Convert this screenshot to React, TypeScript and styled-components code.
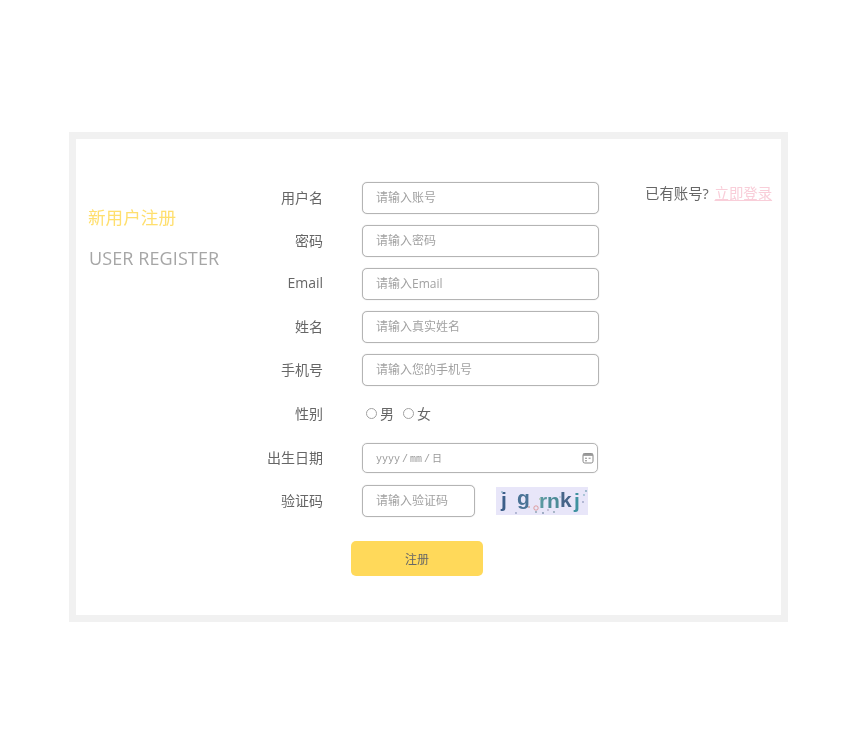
import React from "react";
import styled, { createGlobalStyle } from "styled-components";

const fontStack = `"Open Sans", "Noto Sans CJK SC", sans-serif`;

const GlobalStyle = createGlobalStyle`
  html, body {
    margin: 0;
    background: #fff;
    font-family: ${fontStack};
  }
`;

const fields = [
  { label: "用户名", placeholder: "请输入账号" },
  { label: "密码", placeholder: "请输入密码" },
  { label: "Email", placeholder: "请输入Email" },
  { label: "姓名", placeholder: "请输入真实姓名" },
  { label: "手机号", placeholder: "请输入您的手机号" },
];

const noise = [
  [6, 5, "#8fb7c9"], [20, 26, "#9aa3c4"], [33, 20, "#c79a9a"], [40, 25, "#8aa0b0"],
  [44, 12, "#a8c2a8"], [47, 26, "#7e93ad"], [52, 23, "#b7b0c9"], [58, 25, "#8aa0b0"],
  [64, 10, "#b7c6d9"], [88, 8, "#8fb7c9"], [90, 4, "#7da6b8"], [87, 15, "#9aa3c4"],
] as const;

const CalendarIcon = () => (
  <svg width="12" height="12" viewBox="0 0 12 12" fill="none">
    <rect x="1" y="1.5" width="10" height="9.5" rx="1.8" stroke="#888" strokeWidth="1" />
    <rect x="1" y="1.5" width="10" height="2.4" fill="#999" />
    <rect x="3" y="5.6" width="2" height="1.4" fill="#aaa" />
    <rect x="6.6" y="5.6" width="2" height="1.4" fill="#aaa" />
    <rect x="3" y="8" width="2" height="1.4" fill="#aaa" />
  </svg>
);

const Captcha = () => (
  <CaptchaBox viewBox="0 0 92 28" role="img" aria-label="captcha">
    <CaptchaChar x="5" y="20" fill="#3d5f8a">j</CaptchaChar>
    <CaptchaChar x="21" y="18" fill="#4a7396">g</CaptchaChar>
    <CaptchaChar x="43" y="21" fill="#5a98a0">r</CaptchaChar>
    <CaptchaChar x="51" y="21" fill="#4d8c98">n</CaptchaChar>
    <CaptchaChar x="64" y="20" fill="#466488">k</CaptchaChar>
    <CaptchaChar x="78" y="21" fill="#3f92a0">j</CaptchaChar>
    <circle cx="40" cy="21" r="2.2" fill="none" stroke="#d98a8a" strokeWidth="0.8" />
    {noise.map(([cx, cy, fill], i) => (
      <circle key={i} cx={cx} cy={cy} r="0.9" fill={fill} />
    ))}
  </CaptchaBox>
);

export default function App() {
  return (
    <Page>
      <GlobalStyle />
      <Card>
        <Intro>
          <IntroTitle>新用户注册</IntroTitle>
          <IntroSub>USER REGISTER</IntroSub>
        </Intro>

        <Form onSubmit={(e) => e.preventDefault()}>
          {fields.map((f) => (
            <Row key={f.label}>
              <Label>{f.label}</Label>
              <TextInput placeholder={f.placeholder} />
            </Row>
          ))}

          <GenderRow>
            <Label>性别</Label>
            <RadioGroup>
              <RadioOption>
                <Radio type="radio" name="sex" />男
              </RadioOption>
              <RadioOption>
                <Radio type="radio" name="sex" />女
              </RadioOption>
            </RadioGroup>
          </GenderRow>

          <Row>
            <Label>出生日期</Label>
            <DateField>
              <DateText>yyyy / mm / 日</DateText>
              <CalendarIcon />
            </DateField>
          </Row>

          <Row>
            <Label>验证码</Label>
            <CodeInput placeholder="请输入验证码" />
            <Captcha />
          </Row>

          <SubmitButton type="submit">注册</SubmitButton>
        </Form>

        <LoginHint>
          已有账号? <LoginLink href="#">立即登录</LoginLink>
        </LoginHint>
      </Card>
    </Page>
  );
}

const Page = styled.div`
  padding: 132px 0 0 69px;
  height: 622px;
  filter: blur(0.5px);
`;

const Card = styled.div`
  box-sizing: border-box;
  width: 719px;
  height: 490px;
  border: 7px solid #f1f1f1;
  display: flex;
  align-items: flex-start;
`;

const Intro = styled.div`
  width: 152px;
  padding: 65px 0 0 12px;
`;

const IntroTitle = styled.div`
  font-size: 17.6px;
  line-height: 26px;
  color: #ffdf6e;
`;

const IntroSub = styled.div`
  margin: 16px 0 0 1px;
  font-size: 18px;
  line-height: 24px;
  letter-spacing: 0.1px;
  color: #a6a6a6;
  white-space: nowrap;
`;

const Form = styled.form`
  padding-top: 37px;
  width: 359px;
`;

const Row = styled.div`
  display: flex;
  align-items: center;
  height: 43px;
`;

const GenderRow = styled(Row)`
  height: 45px;
`;

const Label = styled.label`
  width: 83px;
  margin-right: 39px;
  padding-bottom: 2px;
  text-align: right;
  font-size: 14px;
  color: #666;
  white-space: nowrap;
`;

const TextInput = styled.input`
  box-sizing: border-box;
  width: 237px;
  height: 32px;
  padding: 0 12px 0 13px;
  border: 1px solid #b4b4b4;
  border-radius: 5px;
  box-shadow: 0 0 1px #c4c4c4;
  outline: none;
  font-family: inherit;
  font-size: 12px;
  color: #555;

  &::placeholder {
    color: #a2a2a2;
  }
`;

const CodeInput = styled(TextInput)`
  width: 113px;
`;

const RadioGroup = styled.div`
  display: flex;
  gap: 9px;
  padding: 0 0 2px 4px;
`;

const RadioOption = styled.label`
  display: flex;
  align-items: center;
  font-size: 14px;
  color: #666;
`;

const Radio = styled.input`
  appearance: none;
  box-sizing: border-box;
  width: 11px;
  height: 11px;
  margin: 1px 3px 0 0;
  border: 1px solid #a0a0a0;
  border-radius: 50%;
`;

const DateField = styled.div`
  box-sizing: border-box;
  width: 236px;
  height: 30px;
  padding: 0 3px 0 13px;
  border: 1px solid #b4b4b4;
  border-radius: 5px;
  box-shadow: 0 0 1px #c4c4c4;
  display: flex;
  align-items: center;
  justify-content: space-between;
`;

const DateText = styled.span`
  font-family: "Liberation Mono", "Noto Sans CJK SC", monospace;
  font-size: 10px;
  word-spacing: -4px;
  color: #999;
`;

const CaptchaBox = styled.svg`
  width: 92px;
  height: 28px;
  margin-left: 21px;
  background: #e8e6f9;
`;

const CaptchaChar = styled.text`
  font-family: "Liberation Sans", sans-serif;
  font-size: 21px;
  font-weight: 700;
`;

const SubmitButton = styled.button`
  display: block;
  width: 132px;
  height: 35px;
  margin: 19px 0 0 111px;
  border: none;
  border-radius: 5px;
  background: #ffd95a;
  font-family: inherit;
  font-size: 12px;
  color: #666;
`;

const LoginHint = styled.div`
  margin: 44px 0 0 46px;
  font-size: 14.4px;
  line-height: 22px;
  color: #666;
  white-space: nowrap;
`;

const LoginLink = styled.a`
  margin-left: 2px;
  color: #f9ced9;
`;
